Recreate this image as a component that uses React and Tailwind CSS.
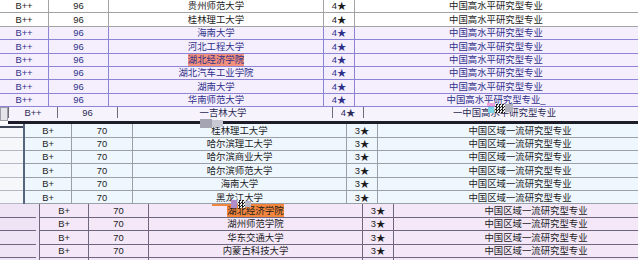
import React from 'react';

const A_COLS = ['w-[49px]', 'w-[60px]', 'w-[215px]', 'w-[31px]', 'w-[282px]'];
const B_COLS = ['w-[47px]', 'w-[61px]', 'w-[214px]', 'w-[31px]', 'w-[284px]'];
const C_COLS = ['w-[49px]', 'w-[60px]', 'w-[214px]', 'w-[31px]', 'w-[284px]'];

const topRows = [
  { name: '贵州师范大学', tone: 'white' },
  { name: '桂林理工大学', tone: 'white' },
  { name: '海南大学', tone: 'lav' },
  { name: '河北工程大学', tone: 'lav' },
  { name: '湖北经济学院', tone: 'lav', hl: true },
  { name: '湖北汽车工业学院', tone: 'lav' },
  { name: '湖南大学', tone: 'lav' },
  { name: '华南师范大学', tone: 'lav', tail: true },
];

const midRows = ['桂林理工大学', '哈尔滨理工大学', '哈尔滨商业大学', '哈尔滨师范大学', '海南大学', '黑龙江大学'];

const lowRows = [
  { name: '湖北经济学院', hl: true },
  { name: '湖州师范学院' },
  { name: '华东交通大学' },
  { name: '内蒙古科技大学' },
  { empty: true },
];

const Cell = ({ w, line, last, children }) => (
  <div className={`${w} shrink-0 flex items-center justify-center ${last ? '' : 'border-r'} ${line}`}>
    {children}
  </div>
);

const TableRow = ({ cols, cells, rowCls, line }) => (
  <div className={`flex h-[13.4px] border-b ${rowCls} ${line}`}>
    {cells.map((c, i) => (
      <Cell key={i} w={cols[i]} line={line} last={i === cells.length - 1}>
        {c}
      </Cell>
    ))}
  </div>
);

const TopTable = () => (
  <div className="flex flex-col">
    {topRows.map((r, i) => {
      const lav = r.tone === 'lav';
      const line = lav ? 'border-[#8d84d6]' : 'border-[#a3a3a3]';
      const rowCls = lav ? 'bg-[#f5effd] text-[#2f2f8a]' : 'bg-white text-[#1c1c1c]';
      const name = r.hl ? <span className="bg-[#f3917c] h-full flex items-center">{r.name}</span> : r.name;
      const major = r.tail ? <span>中国高水平研究型专业<span className="font-['Liberation_Sans']">_</span></span> : '中国高水平研究型专业';
      return <TableRow key={i} cols={A_COLS} line={line} rowCls={rowCls} cells={['B++', '96', name, '4★', major]} />;
    })}
  </div>
);

// the clipped copy of the next row, pasted 8px to the right
const Strip = () => (
  <div className="flex h-[14px]">
    <div className="w-[8px] shrink-0 bg-[#e4e4ea] border border-[#9d9da8]" />
    <div className="flex h-full overflow-hidden bg-[#f7f3fc] text-[#2a2a55]">
      {['B++', '96', '吉林大学', '4★', '中国高水平研究型专业'].map((c, i) => (
        <div key={i} className={`${A_COLS[i]} shrink-0 flex items-start justify-center border-l border-[#6c6c78] h-[11px] leading-[10px] pt-[1px]`}>
          {i === 2 ? <span className="-ml-[4px]">一{c}</span> : i === 4 ? <span>一{c}</span> : c}
        </div>
      ))}
    </div>
  </div>
);

const MidTable = () => (
  <div className="flex">
    <div className="w-[25px] shrink-0 flex flex-col bg-[#f5f7fb] border-r-2 border-[#56657c] pt-[2px]">
      <div className="h-[2px] bg-[#3e4658]" />
      {midRows.map((_, i) => (
        <div key={i} className={`border-b border-[#b4b8c2] ${i === 0 ? 'h-[9.4px]' : 'h-[13.4px]'}`} />
      ))}
    </div>
    <div className="flex flex-col">
      {midRows.map((n, i) => (
        <TableRow
          key={i}
          cols={B_COLS}
          line="border-[#9a9fa8]"
          rowCls="bg-[#eef6fe] text-[#1c1c1c]"
          cells={['B+', '70', n, '3★', '中国区域一流研究型专业']}
        />
      ))}
    </div>
  </div>
);

const LowTable = () => (
  <div className="flex">
    <div className="w-[40px] shrink-0 flex flex-col bg-[#efe3f6] border-r border-[#6d667c]">
      {lowRows.map((_, i) => (
        <div key={i} className="h-[13.4px] border-b border-[#6d667c] mr-[3px]" />
      ))}
    </div>
    <div className="flex flex-col">
      {lowRows.map((r, i) => {
        const name = r.hl ? <span className="bg-[#f2863f] h-full flex items-center">{r.name}</span> : r.name;
        const cells = r.empty ? ['', '', '', '', ''] : ['B+', '70', name, '3★', '中国区域一流研究型专业'];
        return (
          <TableRow
            key={i}
            cols={C_COLS}
            line="border-[#6d667c]"
            rowCls="bg-[#f3e7f8] text-[#1c1c1c]"
            cells={cells}
          />
        );
      })}
    </div>
  </div>
);

export default function App() {
  return (
    <div className="relative w-[638px] h-[260px] overflow-hidden bg-white font-['Liberation_Sans','Noto_Sans_CJK_SC',sans-serif] text-[9.4px] leading-none">
      <TopTable />
      <Strip />
      <div className="h-[3px] ml-[8px] bg-[#1d1d2a]" />
      <MidTable />
      <LowTable />

      {/* paste glitches */}
      <div className="absolute left-[200px] top-[119px] w-[12px] h-[9px] bg-[#a4a4b2]" />
      <div className="absolute left-[212px] top-[120px] w-[11px] h-[7px] bg-[#c9c9d4]" />
      <div className="absolute left-[487px] top-[103px] w-[8px] h-[3px] bg-[#f0a0d8]" />
      <div className="absolute left-[488px] top-[107px] w-[6px] h-[6px] bg-[#7fd6e8]" />
      <div className="absolute left-[495px] top-[104px] w-[10px] h-[9px] bg-[repeating-conic-gradient(#222_0_25%,#eee_0_50%)] bg-[length:3px_3px]" />
      <div className="absolute left-[505px] top-[104px] w-[8px] h-[8px] bg-[#b0b0bc]" />
      <div className="absolute left-[212px] top-[204px] w-[15px] h-[2px] bg-[#f2863f]" />
      <div className="absolute left-[231px] top-[200px] w-[6px] h-[8px] bg-[#b08cc8]" />
      <div className="absolute left-[238px] top-[200px] w-[7px] h-[8px] bg-[repeating-conic-gradient(#222_0_25%,#eee_0_50%)] bg-[length:3px_3px]" />
      <div className="absolute left-[245px] top-[201px] w-[6px] h-[6px] bg-[#b6b6c4]" />
    </div>
  );
}
